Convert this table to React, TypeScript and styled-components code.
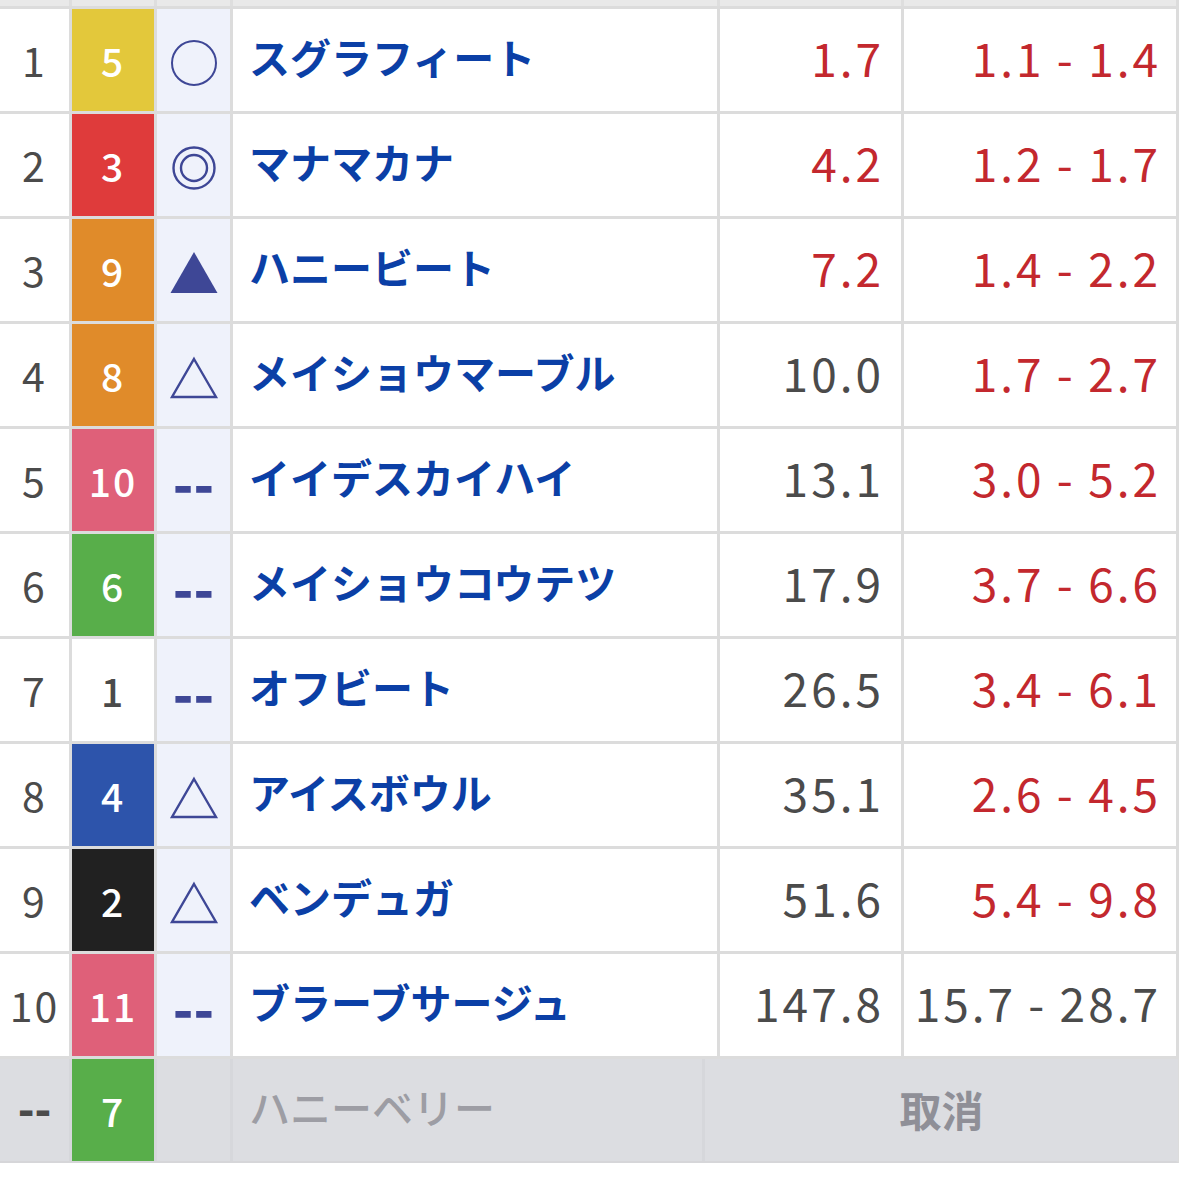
import styled, { createGlobalStyle } from 'styled-components';

const GlobalStyle = createGlobalStyle`
  html, body {
    margin: 0;
    padding: 0;
    background: #ffffff;
  }
  body {
    font-family: "Noto Sans CJK JP", "Noto Sans", sans-serif;
  }
`;

type Mark = 'maru' | 'nijumaru' | 'kuro' | 'sankaku' | 'none';

interface Horse {
  rank: number;
  num: number;
  mark: Mark;
  name: string;
  odds: string;
  range: string;
}

const horses: Horse[] = [
  { rank: 1, num: 5, mark: 'maru', name: 'スグラフィート', odds: '1.7', range: '1.1 - 1.4' },
  { rank: 2, num: 3, mark: 'nijumaru', name: 'マナマカナ', odds: '4.2', range: '1.2 - 1.7' },
  { rank: 3, num: 9, mark: 'kuro', name: 'ハニービート', odds: '7.2', range: '1.4 - 2.2' },
  { rank: 4, num: 8, mark: 'sankaku', name: 'メイショウマーブル', odds: '10.0', range: '1.7 - 2.7' },
  { rank: 5, num: 10, mark: 'none', name: 'イイデスカイハイ', odds: '13.1', range: '3.0 - 5.2' },
  { rank: 6, num: 6, mark: 'none', name: 'メイショウコウテツ', odds: '17.9', range: '3.7 - 6.6' },
  { rank: 7, num: 1, mark: 'none', name: 'オフビート', odds: '26.5', range: '3.4 - 6.1' },
  { rank: 8, num: 4, mark: 'sankaku', name: 'アイスボウル', odds: '35.1', range: '2.6 - 4.5' },
  { rank: 9, num: 2, mark: 'sankaku', name: 'ベンデュガ', odds: '51.6', range: '5.4 - 9.8' },
  { rank: 10, num: 11, mark: 'none', name: 'ブラーブサージュ', odds: '147.8', range: '15.7 - 28.7' },
];

const wakuColors: Record<number, { bg: string; fg: string }> = {
  1: { bg: '#ffffff', fg: '#4a4a4a' },
  2: { bg: '#212121', fg: '#ffffff' },
  3: { bg: '#df3b3b', fg: '#ffffff' },
  4: { bg: '#2d54ab', fg: '#ffffff' },
  5: { bg: '#e3c83b', fg: '#ffffff' },
  6: { bg: '#58ae4a', fg: '#ffffff' },
  7: { bg: '#58ae4a', fg: '#ffffff' },
  8: { bg: '#e08b2a', fg: '#ffffff' },
  9: { bg: '#e08b2a', fg: '#ffffff' },
  10: { bg: '#df6079', fg: '#ffffff' },
  11: { bg: '#df6079', fg: '#ffffff' },
};

const RED = '#c3282e';
const GRAY = '#4b4b4b';
const MARK = '#3e4796';
const CANCEL_BG = '#dcdde1';

const Table = styled.div`
  width: 1179px;
  display: flex;
  flex-direction: column;
`;

const Row = styled.div<{ $cancelled?: boolean }>`
  display: grid;
  grid-template-columns: ${p =>
    p.$cancelled ? '69px 82px 73px 469px 473px' : '69px 82px 73px 484px 181px 272px'};
  column-gap: 3px;
  height: 102px;
  border-top: 3px solid #dcdcdc;
  border-right: 3px solid #dcdcdc;
  background: ${p => (p.$cancelled ? '#d6d7db' : '#dcdcdc')};
  ${p => p.$cancelled && 'border-bottom: 2px solid #d6d6d9;'}
`;

const TopStrip = styled.div`
  display: grid;
  grid-template-columns: 69px 82px 73px 484px 181px 272px;
  column-gap: 3px;
  height: 6px;
  border-right: 3px solid #dcdcdc;
  background: #dedede;
`;

const StripCell = styled.div`
  background: #e9e9e9;
`;

const Cell = styled.div<{ $bg?: string }>`
  display: flex;
  align-items: center;
  background: ${p => p.$bg ?? '#ffffff'};
  min-width: 0;
  overflow: hidden;
  white-space: nowrap;
`;

const RankCell = styled(Cell)`
  justify-content: center;
  padding-bottom: 3px;
  font-size: 41px;
  letter-spacing: 2px;
  color: ${GRAY};
`;

const NumCell = styled(Cell)<{ $fg: string }>`
  justify-content: center;
  font-size: 39px;
  font-weight: 500;
  letter-spacing: 2px;
  color: ${p => p.$fg};
`;

const MarkCell = styled(Cell)`
  justify-content: center;
  color: ${MARK};
`;

const Dash = styled.span<{ $size: number; $drop: number }>`
  font-size: ${p => p.$size}px;
  font-weight: 900;
  letter-spacing: 0;
  margin-top: ${p => p.$drop}px;
`;

const NameCell = styled(Cell)<{ $muted?: boolean }>`
  padding-left: 16px;
  padding-bottom: 8px;
  font-size: 41px;
  font-weight: ${p => (p.$muted ? 500 : 700)};
  color: ${p => (p.$muted ? '#9d9da4' : '#0b3fa6')};
`;

const NumberCell = styled(Cell)<{ $red: boolean; $pad: number }>`
  justify-content: flex-end;
  padding-right: ${p => p.$pad}px;
  padding-bottom: 6px;
  font-size: 46px;
  letter-spacing: 3px;
  word-spacing: -1px;
  color: ${p => (p.$red ? RED : GRAY)};
`;

const CancelCell = styled(Cell)`
  justify-content: center;
  padding-bottom: 4px;
  font-size: 42px;
  font-weight: 700;
  color: #8f8f97;
`;

function MarkIcon({ mark }: { mark: Mark }) {
  if (mark === 'none') return <Dash $size={54} $drop={2}>--</Dash>;
  return (
    <svg width="50" height="50" viewBox="0 0 50 50" style={{ marginTop: 6 }}>
      {mark === 'maru' && <circle cx="25" cy="25" r="22" fill="none" stroke={MARK} strokeWidth="2" />}
      {mark === 'nijumaru' && (
        <>
          <circle cx="25" cy="25" r="20.5" fill="none" stroke={MARK} strokeWidth="2.4" />
          <circle cx="25" cy="25" r="13" fill="none" stroke={MARK} strokeWidth="2.4" />
        </>
      )}
      {mark === 'kuro' && <polygon points="25,4 48.5,45 1.5,45" fill={MARK} />}
      {mark === 'sankaku' && (
        <polygon points="25,6 47,44 3,44" fill="none" stroke={MARK} strokeWidth="2.4" strokeLinejoin="miter" />
      )}
    </svg>
  );
}

export default function App() {
  return (
    <>
      <GlobalStyle />
      <Table>
        <TopStrip>
          {Array.from({ length: 6 }).map((_, i) => (
            <StripCell key={i} />
          ))}
        </TopStrip>
        {horses.map(h => {
          const w = wakuColors[h.num];
          const lower = parseFloat(h.range);
          return (
            <Row key={h.rank}>
              <RankCell>{h.rank}</RankCell>
              <NumCell $bg={w.bg} $fg={w.fg}>{h.num}</NumCell>
              <MarkCell $bg="#eff2fb">
                <MarkIcon mark={h.mark} />
              </MarkCell>
              <NameCell>{h.name}</NameCell>
              <NumberCell $red={parseFloat(h.odds) < 10} $pad={17}>{h.odds}</NumberCell>
              <NumberCell $red={lower < 10} $pad={15}>{h.range}</NumberCell>
            </Row>
          );
        })}
        <Row $cancelled>
          <RankCell $bg={CANCEL_BG}>
            <Dash $size={44} $drop={-4}>--</Dash>
          </RankCell>
          <NumCell $bg={wakuColors[7].bg} $fg={wakuColors[7].fg}>7</NumCell>
          <MarkCell $bg={CANCEL_BG} />
          <NameCell $bg={CANCEL_BG} $muted>ハニーベリー</NameCell>
          <CancelCell $bg={CANCEL_BG}>取消</CancelCell>
        </Row>
      </Table>
    </>
  );
}
